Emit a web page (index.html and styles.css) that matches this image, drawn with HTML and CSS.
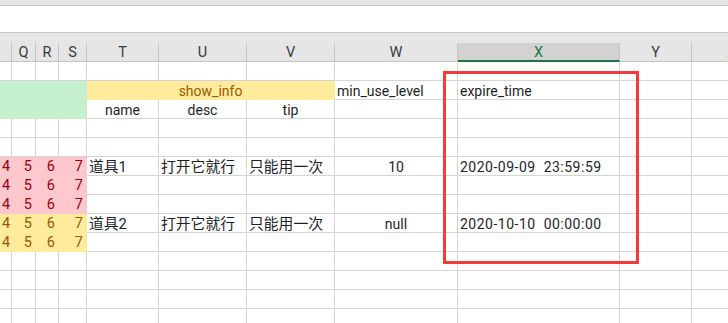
FILE: index.html
```html
<!DOCTYPE html>
<html lang="zh-CN">
<head>
<meta charset="utf-8">
<title>道具配置表</title>
<link rel="stylesheet" href="styles.css">
</head>
<body>
<div class="sheet">
  <div class="topbar"></div>
  <div class="formula"></div>
  <div class="colhead">
    <div class="grid">
      <div class="hc"></div><div class="hc">Q</div><div class="hc">R</div><div class="hc">S</div>
      <div class="hc">T</div><div class="hc">U</div><div class="hc">V</div><div class="hc">W</div>
      <div class="hc sel">X</div><div class="hc">Y</div><div class="hc">Z</div>
    </div>
  </div>
  <div class="grid body">
    <!-- row 1 -->
    <div class="c"></div><div class="c"></div><div class="c"></div><div class="c"></div><div class="c"></div><div class="c"></div><div class="c"></div><div class="c"></div><div class="c"></div><div class="c"></div><div class="c"></div>
    <!-- row 2 -->
    <div class="c good"></div><div class="c good"></div><div class="c good"></div><div class="c good"></div>
    <div class="c neutral mid span3">show_info</div>
    <div class="c">min_use_level</div><div class="c">expire_time</div><div class="c"></div><div class="c"></div>
    <!-- row 3 -->
    <div class="c good"></div><div class="c good"></div><div class="c good"></div><div class="c good"></div>
    <div class="c mid">name</div><div class="c mid">desc</div><div class="c mid">tip</div>
    <div class="c"></div><div class="c"></div><div class="c"></div><div class="c"></div>
    <!-- row 4 -->
    <div class="c"></div><div class="c"></div><div class="c"></div><div class="c"></div><div class="c"></div><div class="c"></div><div class="c"></div><div class="c"></div><div class="c"></div><div class="c"></div><div class="c"></div>
    <!-- row 5 -->
    <div class="c"></div><div class="c"></div><div class="c"></div><div class="c"></div><div class="c"></div><div class="c"></div><div class="c"></div><div class="c"></div><div class="c"></div><div class="c"></div><div class="c"></div>
    <!-- row 6 -->
    <div class="c bad num">4</div><div class="c bad num">5</div><div class="c bad num">6</div><div class="c bad num">7</div>
    <div class="c zh">道具1</div><div class="c zh">打开它就行</div><div class="c zh">只能用一次</div>
    <div class="c mid">10</div><div class="c pre date">2020-09-09  23:59:59</div><div class="c"></div><div class="c"></div>
    <!-- row 7 -->
    <div class="c bad num">4</div><div class="c bad num">5</div><div class="c bad num">6</div><div class="c bad num">7</div>
    <div class="c"></div><div class="c"></div><div class="c"></div><div class="c"></div><div class="c"></div><div class="c"></div><div class="c"></div>
    <!-- row 8 -->
    <div class="c bad num">4</div><div class="c bad num">5</div><div class="c bad num">6</div><div class="c bad num">7</div>
    <div class="c"></div><div class="c"></div><div class="c"></div><div class="c"></div><div class="c"></div><div class="c"></div><div class="c"></div>
    <!-- row 9 -->
    <div class="c neutral num">4</div><div class="c neutral num">5</div><div class="c neutral num">6</div><div class="c neutral num">7</div>
    <div class="c zh">道具2</div><div class="c zh">打开它就行</div><div class="c zh">只能用一次</div>
    <div class="c mid">null</div><div class="c pre date">2020-10-10  00:00:00</div><div class="c"></div><div class="c"></div>
    <!-- row 10 -->
    <div class="c neutral num">4</div><div class="c neutral num">5</div><div class="c neutral num">6</div><div class="c neutral num">7</div>
    <div class="c"></div><div class="c"></div><div class="c"></div><div class="c"></div><div class="c"></div><div class="c"></div><div class="c"></div>
    <!-- rows 11-14 -->
    <div class="c"></div><div class="c"></div><div class="c"></div><div class="c"></div><div class="c"></div><div class="c"></div><div class="c"></div><div class="c"></div><div class="c"></div><div class="c"></div><div class="c"></div>
    <div class="c"></div><div class="c"></div><div class="c"></div><div class="c"></div><div class="c"></div><div class="c"></div><div class="c"></div><div class="c"></div><div class="c"></div><div class="c"></div><div class="c"></div>
    <div class="c"></div><div class="c"></div><div class="c"></div><div class="c"></div><div class="c"></div><div class="c"></div><div class="c"></div><div class="c"></div><div class="c"></div><div class="c"></div><div class="c"></div>
    <div class="c"></div><div class="c"></div><div class="c"></div><div class="c"></div><div class="c"></div><div class="c"></div><div class="c"></div><div class="c"></div><div class="c"></div><div class="c"></div><div class="c"></div>
  </div>
  <div class="mark"></div>
</div>
</body>
</html>
```

FILE: styles.css
```css
* { box-sizing: border-box; }

html, body {
  margin: 0;
  padding: 0;
  background: #ffffff;
  overflow: hidden;
}

.sheet {
  position: relative;
  width: 728px;
  height: 323px;
  overflow: hidden;
  font-family: Roboto, "Noto Sans CJK SC", sans-serif;
  font-size: 14px;
  color: #1e1e2a;
}

.topbar {
  height: 6px;
  background: #e6e6e6;
  border-bottom: 1px solid #c6c6c6;
}

.formula {
  height: 27px;
  background: #ffffff;
  border-bottom: 1px solid #c6c6c6;
}

.colhead {
  background: #e6e6e6;
  padding-top: 10px;
}

.grid {
  display: grid;
  grid-template-columns: 12px 24px 23px 28px 72px 88px 88px 123px 162px 72px 80px;
  width: 772px;
}

.grid.body {
  grid-auto-rows: 19px;
}

/* column letters */
.hc {
  height: 19px;
  border-right: 1px solid #c4c4c4;
  border-bottom: 1px solid #c4c4c4;
  text-align: center;
  line-height: 19px;
  color: #3a3a3a;
  font-size: 14.5px;
}

.hc.sel {
  background: #d2d2d2;
  color: #217346;
  border-bottom: 2px solid #217346;
}

/* data cells */
.c {
  border-right: 1px solid #d4d4d4;
  border-bottom: 1px solid #d4d4d4;
  padding: 1px 2px 0;
  line-height: 18px;
  white-space: nowrap;
}

.zh { font-size: 14.8px; }
.mid { text-align: center; }
.num { text-align: right; padding-right: 3px; font-size: 14.5px; }
.pre { white-space: pre; }
.date { letter-spacing: 0.5px; }
.span3 { grid-column: span 3; }

.good {
  background: #c6efce;
  border-color: #c6efce;
}

.bad {
  background: #ffc7ce;
  border-color: #ffc7ce;
  color: #9c0006;
}

.neutral {
  background: #ffeb9c;
  border-color: #ffeb9c;
  color: #9c5700;
}

/* highlight frame around the expiry column */
.mark {
  position: absolute;
  left: 443px;
  top: 71px;
  width: 196px;
  height: 193px;
  border: 3px solid #f43a3a;
  pointer-events: none;
}
```
